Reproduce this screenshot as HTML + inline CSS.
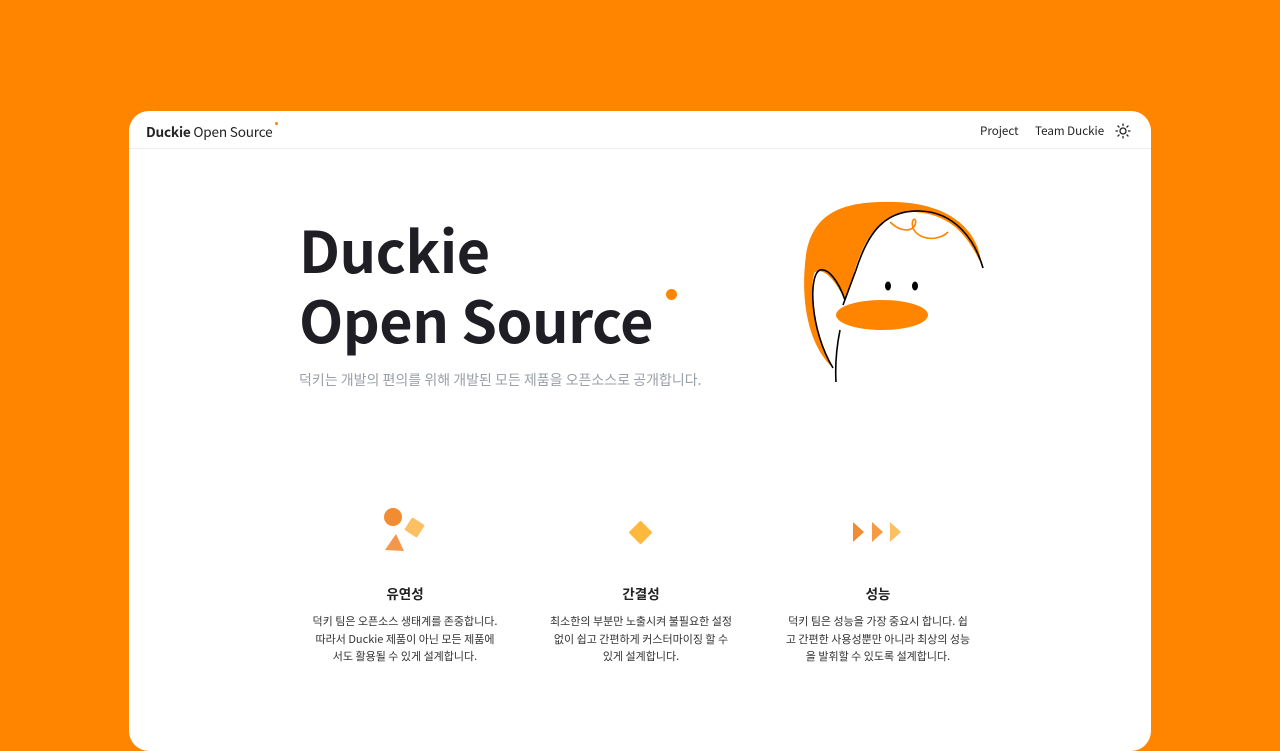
<!DOCTYPE html>
<html><head><meta charset="utf-8"><style>
*{margin:0;padding:0;box-sizing:border-box}
body{width:1280px;height:720px;background:#ff8500;overflow:hidden;font-family:"Noto Sans CJK KR","Liberation Sans",sans-serif;position:relative}
.card{position:absolute;left:129px;top:111px;width:1022px;height:640px;background:#fff;border-radius:20px}
.hdr{position:absolute;left:0;top:0;width:100%;height:38px;border-bottom:1px solid #eee}
.logo{position:absolute;left:17px;top:10px;font-size:13.6px;color:#222;letter-spacing:-0.2px}
.logo b{font-weight:700}
.logo i{position:absolute;right:-6px;top:1px;width:3px;height:3px;border-radius:50%;background:#ff8500}
.nav{position:absolute;top:12px;font-size:11.6px;color:#222}
h1{position:absolute;left:170px;top:102px;font-size:57.5px;line-height:70px;font-weight:700;color:#1e1e24;letter-spacing:-0.5px}
.dot{position:absolute;left:537px;top:178px;width:11px;height:11px;border-radius:50%;background:#ff8500}
.sub{position:absolute;left:170px;top:259px;font-size:14px;color:#9aa0a8}
.col{position:absolute;top:472px;width:200px;text-align:center;color:#222}
.col h3{font-size:13.5px;font-weight:700;margin-bottom:10px;line-height:20px}
.col p{font-size:11px;line-height:17.5px;color:#333}
</style></head><body>
<div class="card">
<div class="hdr">
<div class="logo"><b>Duckie</b> Open Source<i></i></div>
<div class="nav" style="left:851px">Project</div>
<div class="nav" style="left:906px">Team Duckie</div>
<svg style="position:absolute;left:986px;top:12px" width="16" height="16" viewBox="0 0 16 16" fill="none" stroke="#222" stroke-width="1.3" stroke-linecap="round"><circle cx="8" cy="8" r="3"/><path d="M8 1v1.5M8 13.5V15M1 8h1.5M13.5 8H15M3 3l1 1M12 12l1 1M3 13l1-1M12 4l1-1"/></svg>
</div>
<h1>Duckie<br>Open Source</h1>
<div class="dot"></div>
<div class="sub">덕키는 개발의 편의를 위해 개발된 모든 제품을 오픈소스로 공개합니다.</div>
<svg style="position:absolute;left:651px;top:79px" width="220" height="200" viewBox="780 190 220 200">
<path d="M833 368 C808 345 800 300 806 255 C812 215 840 203 880 202 C930 200 965 215 978 248 L983 268 C970 240 955 215 915 212 C885 212 865 230 852 280 L845 300 C835 280 825 268 815 272 C808 285 815 340 833 368Z" fill="#ff8500"/>
<path d="M983 268 C975 240 955 212 920 211 C885 210 868 232 856 270 L843 305" fill="none" stroke="#000" stroke-width="1.6"/>
<path d="M845 300 C838 280 828 268 820 270 C808 275 810 330 833 368" fill="none" stroke="#000" stroke-width="1.6"/>
<path d="M840 330 C836 350 835 365 836 382" fill="none" stroke="#000" stroke-width="1.6"/>
<path d="M890 222 C900 232 912 232 915 225 C918 217 910 217 913 228 C918 240 938 242 948 232" fill="none" stroke="#ff8500" stroke-width="1.6"/>
<ellipse cx="888" cy="286" rx="3" ry="4.5" fill="#000"/>
<ellipse cx="915" cy="286" rx="3" ry="4.5" fill="#000"/>
<ellipse cx="882" cy="315" rx="46" ry="15" fill="#ff8500"/>
</svg>
<svg style="position:absolute;left:251px;top:395px" width="50" height="50" viewBox="0 0 50 50">
<circle cx="13" cy="11" r="9" fill="#f28c33"/>
<rect x="27" y="14" width="15" height="15" rx="1.5" fill="#fcc062" transform="rotate(33 34.5 21.5)"/>
<path d="M16 28 L24 45 L5 44Z" fill="#f4974a"/>
</svg>
<svg style="position:absolute;left:497px;top:407px" width="28" height="28" viewBox="0 0 28 28"><rect x="6" y="6" width="17" height="17" rx="1.5" fill="#ffb83e" transform="rotate(45 14.5 14.5)"/></svg>
<svg style="position:absolute;left:723px;top:410px" width="55" height="23" viewBox="0 0 55 23"><path d="M1 1L12 11L1 21Z" fill="#f28c33"/><path d="M20 1L31 11L20 21Z" fill="#f59a43"/><path d="M38 1L49 11L38 21Z" fill="#fcc062"/></svg>
<div class="col" style="left:176px"><h3>유연성</h3><p>덕키 팀은 오픈소스 생태계를 존중합니다.<br>따라서 Duckie 제품이 아닌 모든 제품에<br>서도 활용될 수 있게 설계합니다.</p></div>
<div class="col" style="left:412px"><h3>간결성</h3><p>최소한의 부분만 노출시켜 불필요한 설정<br>없이 쉽고 간편하게 커스터마이징 할 수<br>있게 설계합니다.</p></div>
<div class="col" style="left:649px"><h3>성능</h3><p>덕키 팀은 성능을 가장 중요시 합니다. 쉽<br>고 간편한 사용성뿐만 아니라 최상의 성능<br>을 발휘할 수 있도록 설계합니다.</p></div>
</div>
</body></html>
